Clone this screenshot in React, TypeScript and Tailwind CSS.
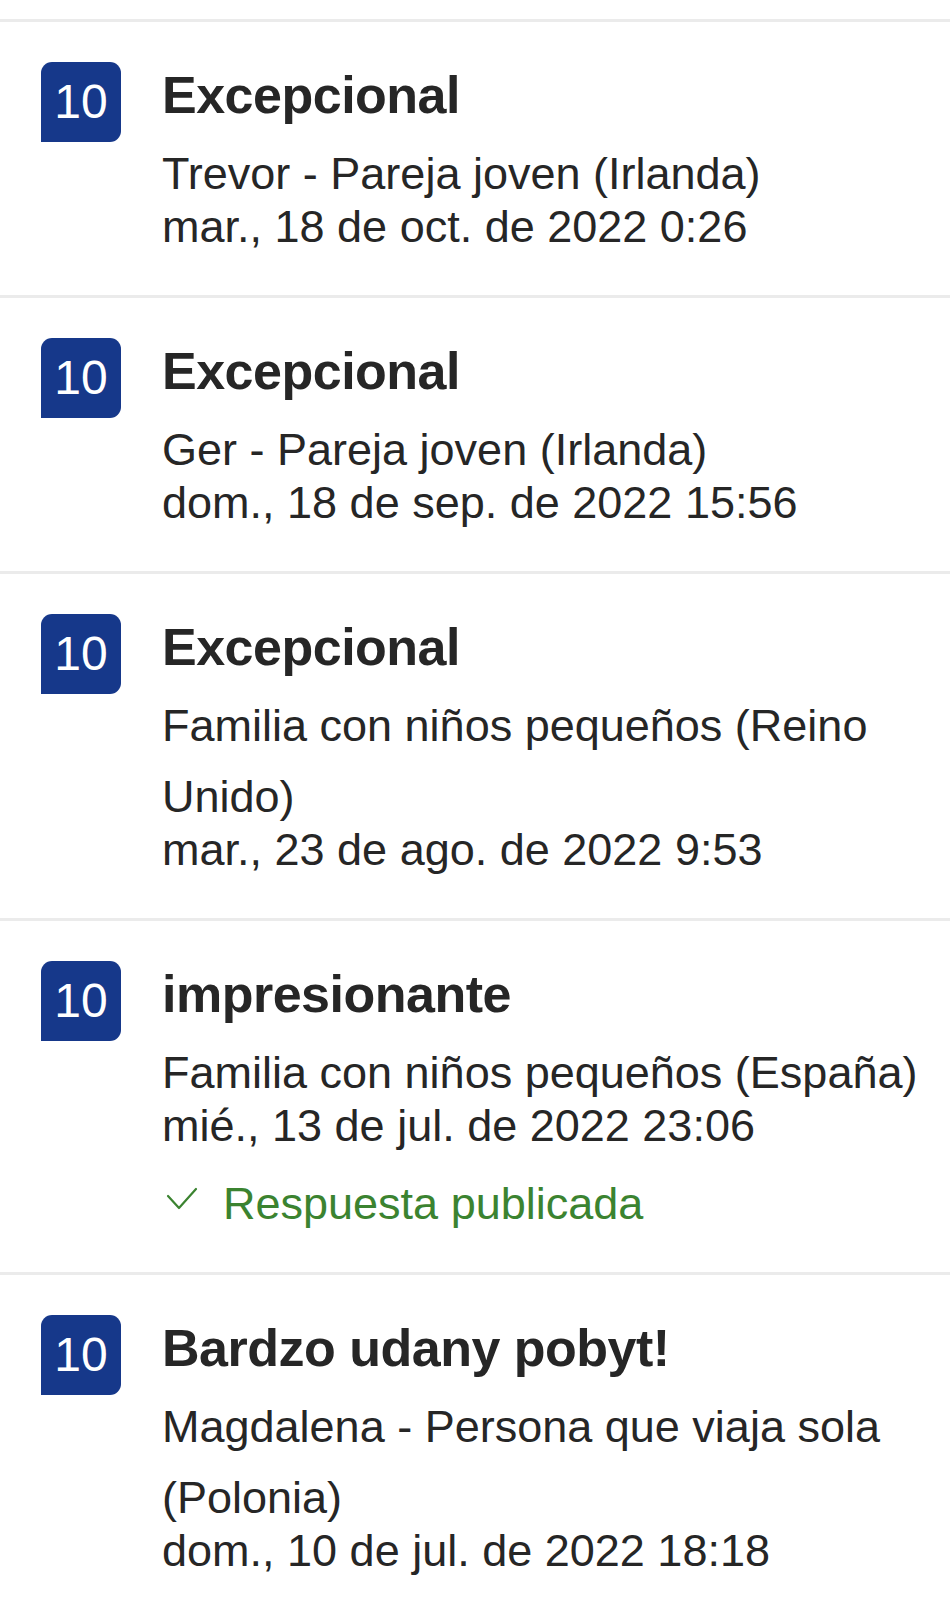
const reviews = [
  {
    title: "Excepcional",
    who: "Trevor - Pareja joven (Irlanda)",
    date: "mar., 18 de oct. de 2022 0:26",
    replied: false,
  },
  {
    title: "Excepcional",
    who: "Ger - Pareja joven (Irlanda)",
    date: "dom., 18 de sep. de 2022 15:56",
    replied: false,
  },
  {
    title: "Excepcional",
    who: "Familia con niños pequeños (Reino Unido)",
    date: "mar., 23 de ago. de 2022 9:53",
    replied: false,
  },
  {
    title: "impresionante",
    who: "Familia con niños pequeños (España)",
    date: "mié., 13 de jul. de 2022 23:06",
    replied: true,
  },
  {
    title: "Bardzo udany pobyt!",
    who: "Magdalena - Persona que viaja sola (Polonia)",
    date: "dom., 10 de jul. de 2022 18:18",
    replied: false,
  },
];

function CheckMark() {
  return (
    <svg width="32" height="24" viewBox="0 0 32 24" fill="none" className="shrink-0">
      <polyline
        points="2,9 13,21 30,2"
        stroke="#3b8330"
        strokeWidth="2.2"
        strokeLinecap="round"
        strokeLinejoin="round"
      />
    </svg>
  );
}

export default function App() {
  return (
    <div className="w-[950px] min-h-[1600px] bg-white text-[#262626] font-['Liberation_Sans',Arial,sans-serif] pt-[19px]">
      {reviews.map((r, i) => (
        <div key={i} className="flex border-t-[3px] border-[#ebebeb] pl-[41px] pr-[20px] pt-[40px] pb-[42px]">
          <div className="w-[80px] h-[80px] shrink-0 bg-[#16388a] rounded-tl-[11px] rounded-tr-[11px] rounded-br-[11px] flex items-center justify-center text-white text-[48px] leading-none">
            10
          </div>
          <div className="ml-[41px] flex flex-col">
            <div className="text-[52px] font-bold leading-[67px] tracking-[-0.5px]">{r.title}</div>
            <div className="mt-[9px] text-[45px] leading-[71px] -mb-[9px]">{r.who}</div>
            <div className="text-[45px] leading-[53px]">{r.date}</div>
            {r.replied && (
              <div className="mt-[25px] flex items-center text-[45px] leading-[53px] text-[#3b8330]">
                <div className="ml-[4px] -mt-[10px]">
                  <CheckMark />
                </div>
                <span className="ml-[25px]">Respuesta publicada</span>
              </div>
            )}
          </div>
        </div>
      ))}
    </div>
  );
}
